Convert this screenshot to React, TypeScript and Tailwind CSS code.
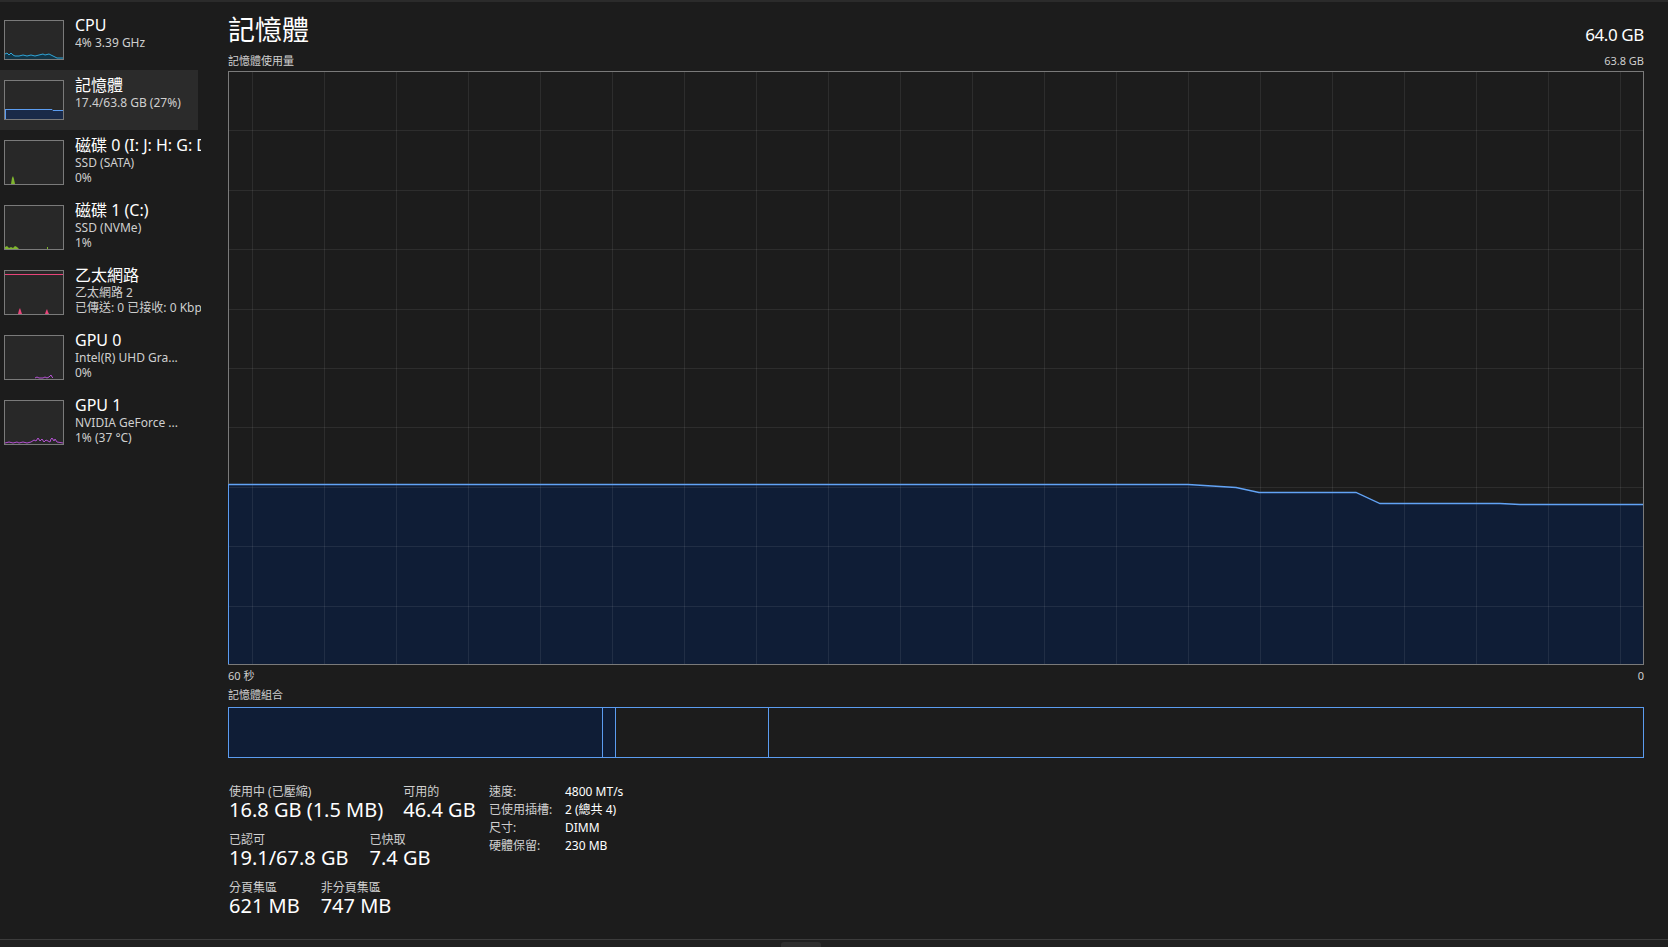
import React from 'react';

type SideItem = {
  title: string;
  lines: string[];
  tall: boolean;
  selected?: boolean;
  graph: React.ReactNode;
};

const FONT = "font-['Noto_Sans','Noto_Sans_CJK_TC',sans-serif]";

const Thumb = ({ tall, children }: { tall: boolean; children: React.ReactNode }) => {
  const h = tall ? 45 : 40;
  return (
    <div className={`${tall ? 'h-[45px]' : 'h-[40px]'} w-[60px] mt-[10px] shrink-0 bg-[#282828] border border-[#7a7a7a] overflow-hidden`}>
      <svg width="58" height={h - 2} viewBox={`0 0 58 ${h - 2}`}>
        {children}
      </svg>
    </div>
  );
};

const sideItems: SideItem[] = [
  {
    title: 'CPU',
    lines: ['4%  3.39 GHz'],
    tall: false,
    graph: (
      <>
        <polygon
          points="0,38 0,33 2,32 4,34 6,32 8,34 10,35 14,35 18,34 22,35 26,34 30,35 34,34 38,33 40,34 44,33 46,34 48,35 52,37 58,37 58,38"
          fill="#123445"
        />
        <polyline
          points="0,33 2,32 4,34 6,32 8,34 10,35 14,35 18,34 22,35 26,34 30,35 34,34 38,33 40,34 44,33 46,34 48,35 52,37 58,37"
          fill="none"
          stroke="#2fa6d9"
          strokeWidth="1"
        />
      </>
    ),
  },
  {
    title: '記憶體',
    lines: ['17.4/63.8 GB (27%)'],
    tall: false,
    selected: true,
    graph: (
      <>
        <polygon points="0,28.5 47,28.5 48,29.5 58,29.5 58,38 0,38" fill="#1a2a48" />
        <polyline points="0,28.5 47,28.5 48,29.5 58,29.5" fill="none" stroke="#5b9cf0" strokeWidth="1" />
        <line x1="0.5" y1="28" x2="0.5" y2="38" stroke="#5b9cf0" strokeWidth="1" />
      </>
    ),
  },
  {
    title: '磁碟 0 (I: J: H: G: D:)',
    lines: ['SSD (SATA)', '0%'],
    tall: true,
    graph: <polygon points="6,43 7,37 8,35 9,38 10,43" fill="#7fb52e" />,
  },
  {
    title: '磁碟 1 (C:)',
    lines: ['SSD (NVMe)', '1%'],
    tall: true,
    graph: (
      <>
        <polygon points="0,43 0,41 2,40 4,42 6,41 8,42 10,40 12,41 14,43" fill="#7fb52e" />
        <rect x="42" y="41" width="1" height="2" fill="#7fb52e" />
      </>
    ),
  },
  {
    title: '乙太網路',
    lines: ['乙太網路 2', '已傳送: 0 已接收: 0 Kbps'],
    tall: true,
    graph: (
      <>
        <line x1="0" y1="3.5" x2="58" y2="3.5" stroke="#e8457a" strokeWidth="1" />
        <polygon points="13,43 14,39 15,37 16,40 17,43" fill="#e8457a" />
        <polygon points="40,43 41,40 42,38 43,41 44,43" fill="#e8457a" />
      </>
    ),
  },
  {
    title: 'GPU 0',
    lines: ['Intel(R) UHD Gra...', '0%'],
    tall: true,
    graph: (
      <>
        <polyline points="30,42 32,41 34,42 38,42 40,41 42,42 44,41 46,39 47,41 48,42" fill="none" stroke="#b652d4" strokeWidth="1" />
      </>
    ),
  },
  {
    title: 'GPU 1',
    lines: ['NVIDIA GeForce ...', '1%  (37 °C)'],
    tall: true,
    graph: (
      <>
        <polyline
          points="0,42 4,41 8,42 12,41 14,42 18,41 22,42 26,41 29,39 31,40 33,37 35,40 37,38 39,41 41,39 43,40 45,41 46,38 47,37 49,40 50,38 52,41 58,42"
          fill="none"
          stroke="#b652d4"
          strokeWidth="1"
        />
      </>
    ),
  },
];

const Sidebar = () => (
  <div className="w-[198px] shrink-0 pt-[8px] flex flex-col">
    {sideItems.map((item) => (
      <div
        key={item.title}
        className={`flex items-start pl-[4px] ${item.tall ? 'h-[65px]' : 'h-[60px]'} ${item.selected ? 'bg-[#2b2b2b]' : ''}`}
      >
        <Thumb tall={item.tall}>{item.graph}</Thumb>
        <div className="ml-[11px] pt-[5px] w-[126px] shrink-0 overflow-hidden flex flex-col whitespace-nowrap">
          <div className="text-[16px] leading-[20px] text-white">{item.title}</div>
          {item.lines.map((l) => (
            <div key={l} className="text-[12px] leading-[15px] text-[#cfcfcf]">
              {l}
            </div>
          ))}
        </div>
      </div>
    ))}
  </div>
);

const W = 1416;
const H = 594;
const linePts: [number, number][] = [
  [0, 413],
  [960, 413],
  [1008, 416],
  [1031, 421],
  [1128, 421],
  [1152, 432],
  [1272, 432],
  [1292, 433],
  [1416, 433],
];

const UsageChart = () => {
  const pts = linePts.map(([x, y]) => `${x},${y + 0.5}`).join(' ');
  const area = `${pts} ${W},${H} 0,${H}`;
  const vLines = Array.from({ length: 20 }, (_, k) => 24 + 72 * k);
  const hLines = Array.from({ length: 9 }, (_, k) => Math.round((H / 10) * (k + 1)));
  return (
    <svg width={W} height={H} viewBox={`0 0 ${W} ${H}`} className="block">
      <polygon points={area} fill="#0f1d36" />
      {vLines.map((x) => (
        <line key={`v${x}`} x1={x + 0.5} y1={0} x2={x + 0.5} y2={H} stroke="#ffffff" strokeOpacity="0.08" />
      ))}
      {hLines.map((y) => (
        <line key={`h${y}`} x1={0} y1={y + 0.5} x2={W} y2={y + 0.5} stroke="#ffffff" strokeOpacity="0.08" />
      ))}
      <polyline points={pts} fill="none" stroke="#62a3f5" strokeWidth="1.3" />
      <rect x="0.5" y="0.5" width={W - 1} height={H - 1} fill="none" stroke="#7a7a7a" />
      <line x1="0.5" y1="413" x2="0.5" y2={H - 1} stroke="#5b9cf0" />
    </svg>
  );
};

const Stat = ({ label, value }: { label: string; value: string }) => (
  <div className="flex flex-col">
    <div className="text-[12px] leading-[14px] text-[#cfcfcf] whitespace-nowrap">{label}</div>
    <div className="text-[20px] leading-[22px] text-white whitespace-nowrap">{value}</div>
  </div>
);

const specs: [string, string][] = [
  ['速度:', '4800 MT/s'],
  ['已使用插槽:', '2 (總共 4)'],
  ['尺寸:', 'DIMM'],
  ['硬體保留:', '230 MB'],
];

const MemoryPanel = () => (
  <div className="flex-1 pl-[30px] pr-[24px] flex flex-col">
    <div className="h-[44px] flex items-end justify-between">
      <div className="text-[27px] leading-[32px] text-white">記憶體</div>
      <div className="text-[17px] leading-[22px] tracking-[-0.4px] text-white">64.0 GB</div>
    </div>
    <div className="h-[25px] pb-[3px] flex items-end justify-between text-[11px] leading-[14px] text-[#cfcfcf]">
      <span>記憶體使用量</span>
      <span>63.8 GB</span>
    </div>
    <UsageChart />
    <div className="mt-[4px] flex justify-between text-[11px] leading-[14px] text-[#cfcfcf]">
      <span>60 秒</span>
      <span>0</span>
    </div>
    <div className="mt-[5px] text-[11px] leading-[14px] text-[#cfcfcf]">記憶體組合</div>
    <div className="mt-[5px] h-[51px] border border-[#5b9cf0] flex">
      <div className="w-[373px] bg-[#0f1d36]" />
      <div className="w-[13px] bg-[#0f1d36] border-l border-[#5b9cf0]" />
      <div className="w-[153px] border-l border-[#5b9cf0]" />
      <div className="flex-1 border-l border-[#5b9cf0]" />
    </div>
    <div className="mt-[27px] flex items-start">
      <div className="w-[261px] shrink-0 flex flex-col gap-[12px] pl-[1px]">
        <div className="flex gap-[20px]">
          <Stat label="使用中 (已壓縮)" value="16.8 GB (1.5 MB)" />
          <Stat label="可用的" value="46.4 GB" />
        </div>
        <div className="flex gap-[21px]">
          <Stat label="已認可" value="19.1/67.8 GB" />
          <Stat label="已快取" value="7.4 GB" />
        </div>
        <div className="flex gap-[21px]">
          <Stat label="分頁集區" value="621 MB" />
          <Stat label="非分頁集區" value="747 MB" />
        </div>
      </div>
      <div className="-mt-[2px] flex flex-col text-[12px] leading-[18px]">
        {specs.map(([k, v]) => (
          <div key={k} className="flex">
            <span className="w-[76px] text-[#cfcfcf]">{k}</span>
            <span className="text-white">{v}</span>
          </div>
        ))}
      </div>
    </div>
  </div>
);

const App = () => {
  return (
    <div className={`${FONT} w-[1668px] h-[947px] bg-[#1c1c1c] border-t-2 border-[#2b2b2b] flex flex-col overflow-hidden`}>
      <div className="flex flex-1 min-h-0">
        <Sidebar />
        <MemoryPanel />
      </div>
      <div className="h-[8px] shrink-0 border-t border-[#3c3c3c] bg-[#202020] relative">
        <div className="absolute left-[781px] top-[2px] w-[40px] h-[6px] rounded-t-[3px] bg-[#2e2e2e]" />
      </div>
    </div>
  );
};

export default App;
